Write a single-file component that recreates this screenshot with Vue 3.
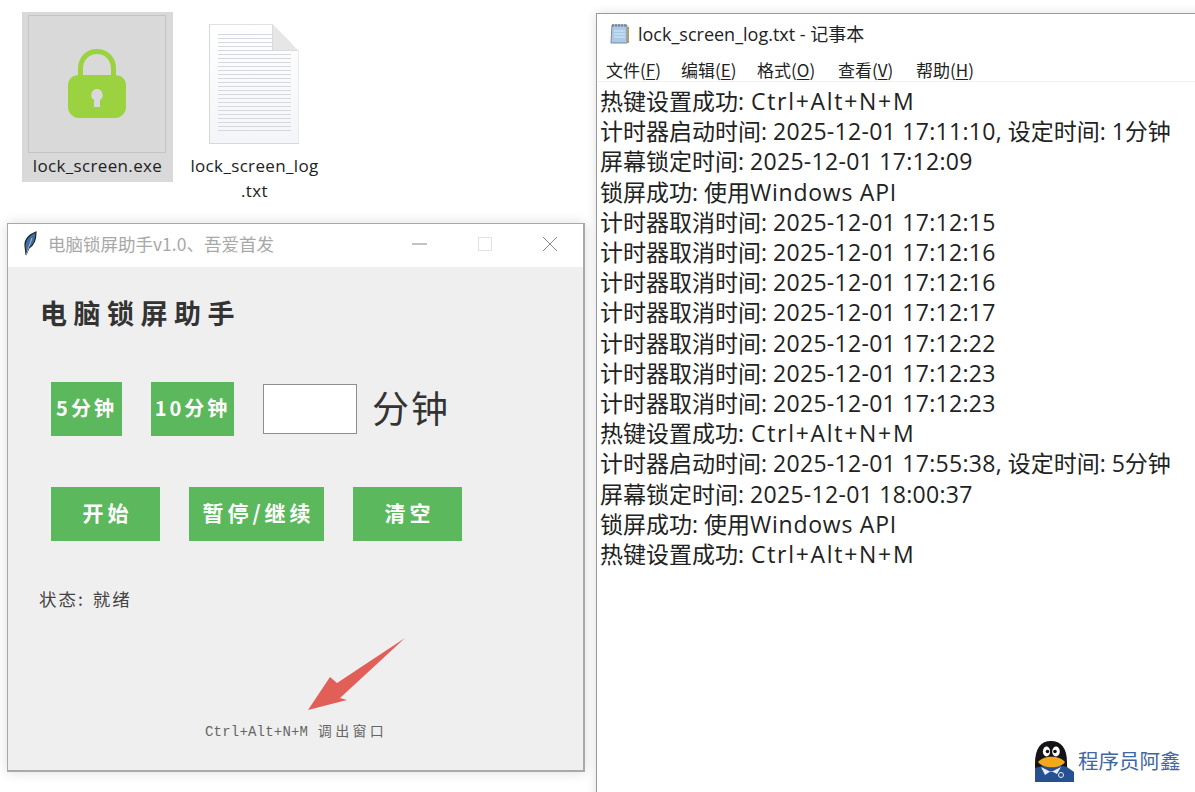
<script setup>
const logLines = [
  '热键设置成功: Ctrl+Alt+N+M',
  '计时器启动时间: 2025-12-01 17:11:10, 设定时间: 1分钟',
  '屏幕锁定时间: 2025-12-01 17:12:09',
  '锁屏成功: 使用Windows API',
  '计时器取消时间: 2025-12-01 17:12:15',
  '计时器取消时间: 2025-12-01 17:12:16',
  '计时器取消时间: 2025-12-01 17:12:16',
  '计时器取消时间: 2025-12-01 17:12:17',
  '计时器取消时间: 2025-12-01 17:12:22',
  '计时器取消时间: 2025-12-01 17:12:23',
  '计时器取消时间: 2025-12-01 17:12:23',
  '热键设置成功: Ctrl+Alt+N+M',
  '计时器启动时间: 2025-12-01 17:55:38, 设定时间: 5分钟',
  '屏幕锁定时间: 2025-12-01 18:00:37',
  '锁屏成功: 使用Windows API',
  '热键设置成功: Ctrl+Alt+N+M'
].map((line) => line.split(/(Ctrl\+Alt\+N\+M|Windows API|\d{4}-\d\d-\d\d \d\d:\d\d:\d\d)/))

const runClass = (part) => {
  if (part.startsWith('Ctrl')) return 'run-key'
  if (part.startsWith('Windows')) return 'run-api'
  if (/^\d{4}-/.test(part)) return 'run-date'
  return ''
}

const menus = [
  ['文件(', 'F', ')'],
  ['编辑(', 'E', ')'],
  ['格式(', 'O', ')'],
  ['查看(', 'V', ')'],
  ['帮助(', 'H', ')']
]
const docLines = Array.from({ length: 25 }, (_, i) => i)
</script>

<template>
  <div class="desktop">
    <div class="file file-exe">
      <div class="thumb">
        <svg width="58" height="70" viewBox="0 0 58 70">
          <path d="M12.5 30V20C12.5 9 20 2.5 29 2.5S45.5 9 45.5 20V30" fill="none" stroke="#9ad33f" stroke-width="5"/>
          <path fill-rule="evenodd" fill="#9ad33f" d="M11 26H47C53 26 58 30 58 36V58C58 64 53 69 47 69H11C5 69 0 64 0 58V36C0 30 5 26 11 26ZM29 40A6 6 0 0 0 26 51L26 58H32L32 51A6 6 0 0 0 29 40Z"/>
        </svg>
      </div>
      <div class="file-name">lock_screen.exe</div>
    </div>

    <div class="file file-txt">
      <div class="doc">
        <div class="doc-lines">
          <i v-for="n in docLines" :key="n"></i>
        </div>
        <svg class="doc-fold" width="27" height="27" viewBox="0 0 27 27">
          <path d="M0 0L27 27H0Z" fill="#e6e6e6" stroke="#d0d0d0"/>
          <path d="M0 0H27V27Z" fill="#fff"/>
        </svg>
      </div>
      <div class="file-name">lock_screen_log<br>.txt</div>
    </div>

    <section class="app-window">
      <header class="app-title">
        <svg class="feather" width="14" height="26" viewBox="0 0 14 26">
          <path d="M3 24C3 20 2 17 2 14C2 8 7 3 13 1C13 7 11 14 6 17C5 19 4 21 3 24Z" fill="#3c6ea5" stroke="#222" stroke-width="1.2"/>
          <path d="M3 24L9 7" stroke="#cfe0ee" stroke-width=".7"/>
        </svg>
        <span class="app-title-text">电脑锁屏助手v1.0、吾爱首发</span>
        <div class="win-controls">
          <svg width="16" height="16" viewBox="0 0 16 16"><path d="M0 8H15" stroke="#888"/></svg>
          <svg width="16" height="16" viewBox="0 0 16 16"><rect x="1.5" y="1.5" width="13" height="13" fill="none" stroke="#e2e2e2"/></svg>
          <svg width="16" height="16" viewBox="0 0 16 16"><path d="M1 1L15 15M15 1L1 15" stroke="#888"/></svg>
        </div>
      </header>
      <div class="app-body">
        <h1>电脑锁屏助手</h1>
        <div class="row-minutes">
          <button class="btn b5">5分钟</button>
          <button class="btn b10">10分钟</button>
          <div class="minutes-input"></div>
          <span class="minutes-label">分钟</span>
        </div>
        <div class="row-actions">
          <button class="btn act a1">开始</button>
          <button class="btn act a2">暂停/继续</button>
          <button class="btn act a3">清空</button>
        </div>
        <div class="status">状态: 就绪</div>
        <div class="hotkey">Ctrl+Alt+N+M <span class="hotkey-cjk">调出窗口</span></div>
      </div>
      <svg class="arrow" width="100" height="74" viewBox="0 0 100 74">
        <path d="M0 72L22 39L29 45L97 0L32 60L39 62Z" fill="#e25f58"/>
      </svg>
    </section>

    <section class="notepad">
      <header class="np-title">
        <svg width="20" height="22" viewBox="0 0 20 22">
          <path d="M3 3H18V21H2Z" fill="#a9c9e6" stroke="#7d8b99"/>
          <path d="M4 2V5M7 2V5M10 2V5M13 2V5M16 2V5" stroke="#667" stroke-width="1"/>
          <path d="M5 9H16M5 12H16M5 15H16" stroke="#dcebf7"/>
          <path d="M18 5H20V21H18Z" fill="#b59b6a"/>
        </svg>
        <span>lock_screen_log.txt - 记事本</span>
      </header>
      <nav class="np-menu">
        <span v-for="m in menus" :key="m[1]" class="np-item">{{ m[0] }}<u>{{ m[1] }}</u>{{ m[2] }}</span>
      </nav>
      <div class="np-text">
        <div v-for="(line, i) in logLines" :key="i" class="np-line"><span v-for="(part, j) in line" :key="j" :class="runClass(part)">{{ part }}</span></div>
      </div>
    </section>

    <div class="watermark">
      <svg width="39" height="42" viewBox="0 0 39 42">
        <path d="M0 42V24C0 8 6 1 16 1S32 8 32 22V30H0Z" fill="#141418"/>
        <path d="M0 28L8 26H28L32 27L39 32V42H0Z" fill="#26508f"/>
        <path d="M6 27L16 32L26 27L22 34L16 31L10 35Z" fill="#e8eef5"/>
        <ellipse cx="11.5" cy="11.5" rx="3.6" ry="5" fill="#fff"/>
        <ellipse cx="21" cy="11.5" rx="3.8" ry="5" fill="#fff"/>
        <circle cx="12.5" cy="11.5" r="1.8" fill="#111"/>
        <circle cx="20" cy="11.5" r="1.8" fill="#111"/>
        <path d="M3 22C9 15 24 15 30 22C26 29 8 29 3 22Z" fill="#f3a81c"/>
        <circle cx="26" cy="35" r="2.5" fill="none" stroke="#e8eef5"/>
      </svg>
      <span class="wm-text">程序员阿鑫</span>
    </div>
  </div>
</template>

<style>
html, body { margin: 0; background: #fff; }
</style>

<style scoped>
.desktop {
  position: relative;
  width: 1195px;
  height: 792px;
  overflow: hidden;
  background: #fff;
  font-family: "Noto Sans CJK SC", "Noto Sans", sans-serif;
}
.file { position: absolute; display: flex; flex-direction: column; align-items: center; }
.file-name { font: 17px/25px "Open Sans", "Noto Sans CJK SC", sans-serif; color: #222; text-align: center; letter-spacing: .35px; white-space: nowrap; }
.file-exe { left: 22px; top: 12px; width: 151px; height: 170px; background: #d9d9d9; box-sizing: border-box; }
.thumb {
  margin-top: 3px; margin-right: 2px; width: 138px; height: 138px; box-sizing: border-box; border: 1px solid #c4c4c4;
  display: flex; align-items: center; justify-content: center;
}
.file-exe .file-name { margin-top: 0; }
.file-txt { left: 179px; top: 24px; width: 151px; }
.doc {
  position: relative; width: 90px; height: 120px; margin-right: 2px; box-sizing: border-box;
  background: linear-gradient(#fff, #f3f5f8);
  border: 1px solid #d6d8da; border-top-color: #e2e2e2;
  clip-path: polygon(0 0, 64px 0, 100% 27px, 100% 100%, 0 100%);
}
.doc-fold { position: absolute; right: -1px; top: -1px; }
.doc-lines { padding: 9px 8px 0; display: flex; flex-direction: column; gap: 3px; width: 73px; }
.doc-lines i { display: block; height: 1px; background: #d5d8dc; }
.file-txt .file-name { margin-top: 9px; }

.app-window {
  position: absolute; left: 7px; top: 223px; width: 578px; height: 549px;
  box-sizing: border-box; border: 1px solid #a9a9a9; border-width: 1px 2px 2px 1px;
  box-shadow: 0 0 12px rgba(0,0,0,.14);
  background: #efefef; display: flex; flex-direction: column;
}
.app-title {
  height: 43px; box-sizing: border-box; padding: 0 0 4px 16px; flex: none; background: #fff; display: flex; align-items: center;
  color: #a8a8a8; font-size: 17.5px;
}
.feather { margin-right: 11px; margin-left: -1px; }
.win-controls { margin-left: auto; display: flex; gap: 49px; padding-right: 25px; align-items: center; }
.app-body { flex: 1; position: relative; padding: 0 0 0 43px; display: flex; flex-direction: column; align-items: flex-start; }
h1 {
  margin: 28px 0 0 -11px; font-size: 27px; line-height: 36px; font-weight: 700; color: #333; letter-spacing: 6.5px; white-space: nowrap;
}
.row-minutes { display: flex; align-items: center; margin-top: 49px; height: 58px; }
.btn {
  border: 0; padding: 0 0 4px; background: #5cb85c; color: #fff; font-weight: 700;
  font-family: "Noto Sans CJK SC", "Liberation Sans", sans-serif; display: flex; align-items: center; justify-content: center;
}
.b5, .b10 { height: 54px; font-size: 20px; letter-spacing: 3px; white-space: nowrap; }
.b5 { width: 71px; }
.b10 { width: 83px; margin-left: 29px; }
.minutes-input { width: 92px; height: 48px; margin-left: 29px; margin-right: 1px; background: #fff; border: 1px solid #8e8e8e; }
.minutes-label { margin: 0 0 4px 14px; font-size: 37px; color: #333; letter-spacing: 2px; line-height: 58px; }
.row-actions { display: flex; margin-top: 49px; }
.act { height: 54px; padding-left: 4px; font-size: 21px; letter-spacing: 4px; white-space: nowrap; }
.a1 { width: 109px; }
.a2 { width: 135px; margin-left: 29px; }
.a3 { width: 109px; margin-left: 29px; }
.status { margin: 46px 0 0 -12px; font-size: 17.5px; line-height: 24px; color: #444; letter-spacing: 2px; word-spacing: 2px; white-space: nowrap; }
.hotkey {
  position: absolute; left: 197px; top: 455px; font: 14px/20px "Liberation Mono", "Noto Sans CJK SC", monospace;
  color: #666; letter-spacing: .2px; white-space: nowrap;
}
.hotkey-cjk { letter-spacing: 3.3px; margin-left: 1px; }
.arrow { position: absolute; left: 300px; top: 414px; }

.notepad {
  position: absolute; left: 596px; top: 13px; width: 620px; height: 800px; box-sizing: border-box;
  border: 1px solid #9a9a9a; background: #fff; box-shadow: 0 0 10px rgba(0,0,0,.12);
  display: flex; flex-direction: column;
}
.np-title { height: 38px; padding-left: 12px; gap: 9px; display: flex; align-items: center; font: 18px "Open Sans", "Noto Sans CJK SC", sans-serif; color: #222; }
.np-menu { height: 30px; box-sizing: border-box; display: flex; align-items: center; border-bottom: 1px solid #f0f0f0; padding: 6px 0 0 9px; font-size: 17px; color: #222; }
.np-menu u { text-underline-offset: 2px; }
.np-item { display: block; white-space: nowrap; }
.np-item:nth-child(1) { width: 75px; }
.np-item:nth-child(2) { width: 76px; }
.np-item:nth-child(3) { width: 81px; }
.np-item:nth-child(4) { width: 78px; }
.np-text { padding: 4px 0 0 3px; font: 23px/30.2px "Open Sans", "Noto Sans CJK SC", sans-serif; color: #222; }
.np-line { white-space: nowrap; }
.run-key { letter-spacing: 1.7px; margin-left: 1px; }
.run-api { letter-spacing: .75px; }
.run-date { letter-spacing: .3px; }

.watermark { position: absolute; left: 1035px; top: 740px; display: flex; align-items: center; gap: 4px; font-size: 20.5px; color: #3f689f; }
.wm-text { margin-bottom: 2px; }
</style>
